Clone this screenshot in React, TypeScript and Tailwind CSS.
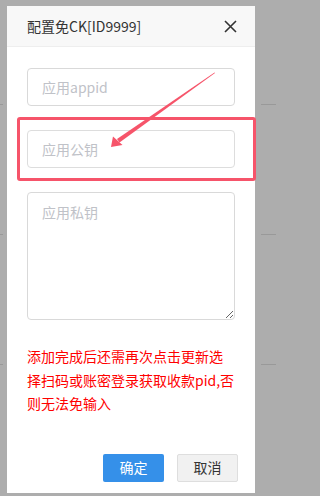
export default function App() {
  return (
    <div className="relative h-[496px] w-full min-w-[276px] overflow-hidden bg-[#adadad] font-['Noto_Sans_CJK_SC',sans-serif]">
      {/* page behind the overlay */}
      <div className="flex w-[276px] flex-col">
        {[105, 130, 130].map((h, i) => (
          <div key={i} style={{ height: h }} className="flex items-end">
            <div className="h-px w-[3px] bg-[#999]" />
            <div className="ml-auto h-px w-[15px] bg-[#999]" />
          </div>
        ))}
      </div>

      {/* dialog */}
      <div className="absolute left-[7px] top-[6px] flex w-[248px] flex-col bg-white">
        <div className="flex h-[41px] items-center justify-between border-b border-[#eeeeee] bg-[#f8f8f8] pl-[20px] pr-[18px]">
          <span className="text-[14px] text-[#333]">配置免CK[ID9999]</span>
          <svg width="13" height="13" viewBox="0 0 13 13" className="mt-[1px]">
            <path d="M1 1L12 12M12 1L1 12" stroke="#333" strokeWidth="1.6" />
          </svg>
        </div>
        <div className="flex flex-col px-[20px] pb-[11px] pt-[21px]">
          <input
            placeholder="应用appid"
            className="h-[38px] rounded-[4px] border border-[#d9d9d9] px-[14px] text-[14px] outline-none placeholder:text-[#c0c2c8]"
          />
          <input
            placeholder="应用公钥"
            className="mt-[24px] h-[38px] rounded-[4px] border border-[#dddddd] px-[14px] text-[14px] outline-none placeholder:text-[#c0c2c8]"
          />
          <textarea
            placeholder="应用私钥"
            className="mt-[24px] h-[128px] rounded-[4px] border border-[#d9d9d9] px-[14px] py-[9px] text-[14px] outline-none placeholder:text-[#c0c2c8]"
          />
          <p className="mt-[25px] text-[14px] leading-[23.5px] text-[#ff0000]">
            添加完成后还需再次点击更新选
            <br />
            择扫码或账密登录获取收款pid,否
            <br />
            则无法免输入
          </p>
          <div className="mt-[38px] flex justify-end gap-[13px]">
            <button className="h-[28px] w-[61px] rounded-[2px] bg-[#3590e9] text-[14px] text-white">确定</button>
            <button className="mr-[-3px] h-[28px] w-[61px] rounded-[2px] border border-[#dedede] bg-[#f1f1f1] text-[14px] text-[#333]">
              取消
            </button>
          </div>
        </div>
      </div>

      {/* annotation: red box */}
      <div className="absolute left-[17px] top-[117px] h-[64px] w-[239px] rounded-[3px] border-[3px] border-[#f6546a]" />

      {/* annotation: arrow */}
      <svg className="pointer-events-none absolute left-0 top-0" width="276" height="496" viewBox="0 0 276 496">
        <polygon points="215,73 119.5,142.5 117,139 214.5,72.5" fill="#f6546a" />
        <polygon points="111,147 113,136.5 122.5,145" fill="#f6546a" />
      </svg>
    </div>
  );
}
